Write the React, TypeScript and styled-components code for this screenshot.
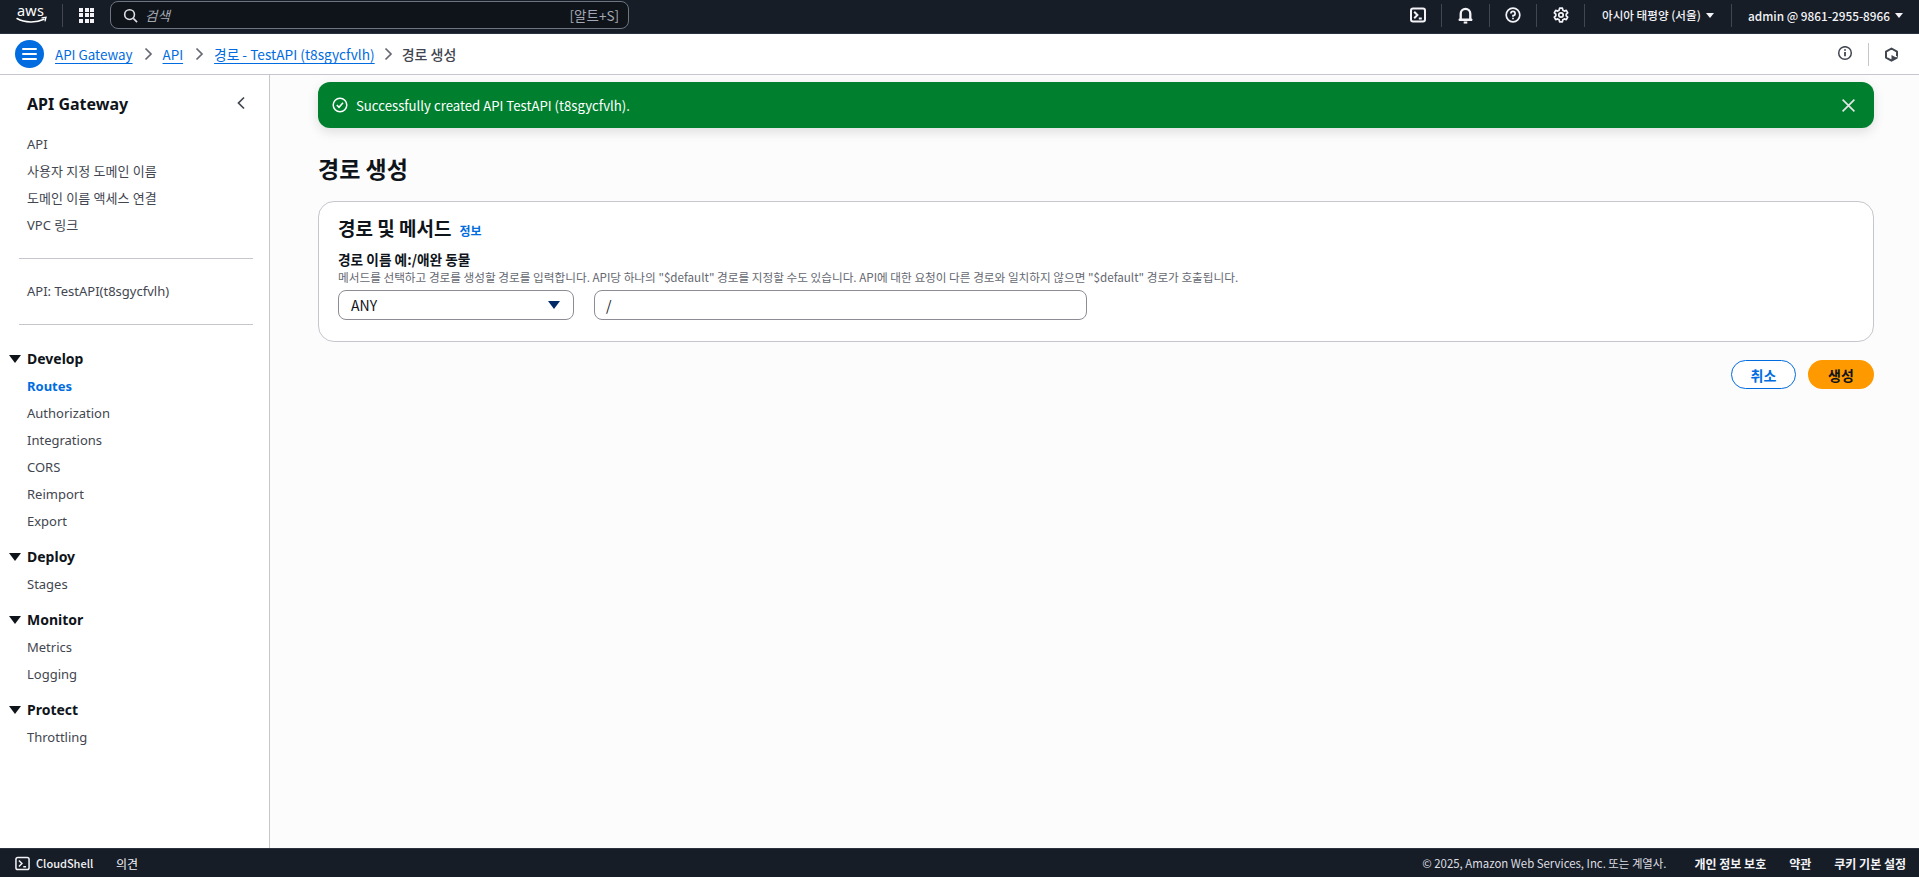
import React from "react";
import styled, { createGlobalStyle } from "styled-components";

const CJK = `"Noto Sans CJK KR", "Noto Sans", sans-serif`;
const LATIN = `"Noto Sans", "Noto Sans CJK KR", sans-serif`;

const Global = createGlobalStyle`
  html, body { margin: 0; padding: 0; height: 100%; background: #fff; }
  #root { height: 100%; }
  * { box-sizing: border-box; }
  body { font-family: ${CJK}; font-size: 14px; color: #0f141a; }
`;

const Page = styled.div`
  display: flex;
  flex-direction: column;
  height: 877px;
  overflow: hidden;
`;

const TopBar = styled.header`
  flex: 0 0 34px;
  display: flex;
  align-items: center;
  background: #161d26;
  border-bottom: 1px solid #2a3240;
  padding: 0 14px 3px 16px;
  color: #f3f3f7;
`;

const LogoBox = styled.div`
  width: 33px;
  height: 30px;
  display: flex;
  align-items: center;
  margin-right: 13px;
`;

const VDivider = styled.span`
  width: 1px;
  height: 23px;
  background: #424650;
  flex: none;
`;

const LightDivider = styled(VDivider)`
  background: #c6c6cd;
  margin: 0 15px 0 15px;
`;

const GridBtn = styled.div`
  width: 15px;
  height: 15px;
  margin: 0 16px;
  display: grid;
  grid-template-columns: repeat(3, 4px);
  grid-auto-rows: 4px;
  gap: 1.5px;
  span { background: #f3f3f7; }
`;

const Search = styled.div`
  width: 519px;
  height: 28px;
  border: 1px solid #6e7480;
  border-radius: 8px;
  background: #0f141a;
  display: flex;
  align-items: center;
  padding: 0 9px 0 12px;
  font-size: 13.5px;
  color: #a4a8b3;
`;

const SearchHint = styled.span`
  font-style: italic;
  margin-left: 7px;
  flex: 1;
`;

const Spacer = styled.div`
  flex: 1;
`;

const TopIcon = styled.div<{ $w: number }>`
  width: ${(p) => p.$w}px;
  height: 30px;
  display: flex;
  align-items: center;
  justify-content: center;
  flex: none;
`;

const TopMenu = styled.div<{ $w: number; $size: number; $pad: number }>`
  width: ${(p) => p.$w}px;
  padding-left: ${(p) => p.$pad}px;
  display: flex;
  align-items: center;
  gap: 5px;
  font-size: ${(p) => p.$size}px;
  font-weight: 500;
  flex: none;
  white-space: nowrap;
  color: #f3f3f7;
`;

const Caret = styled.span<{ $c?: string; $s?: number }>`
  width: 0;
  height: 0;
  flex: none;
  border-left: ${(p) => p.$s ?? 4}px solid transparent;
  border-right: ${(p) => p.$s ?? 4}px solid transparent;
  border-top: ${(p) => Math.round((p.$s ?? 4) * 1.35)}px solid ${(p) => p.$c ?? "#f3f3f7"};
`;

const CrumbBar = styled.div`
  flex: 0 0 41px;
  display: flex;
  align-items: center;
  background: #fff;
  border-bottom: 1px solid #c6c6cd;
  padding: 0 20px 0 15px;
`;

const MenuRound = styled.div`
  width: 29px;
  height: 28px;
  border-radius: 50%;
  background: #006ce0;
  display: flex;
  flex-direction: column;
  align-items: center;
  justify-content: center;
  gap: 3px;
  margin-right: 11px;
  span { width: 15px; height: 2px; background: #fff; border-radius: 1px; }
`;

const CrumbLink = styled.a<{ $size?: number }>`
  font-size: ${(p) => p.$size ?? 13.4}px;
  color: #006ce0;
  text-decoration: underline;
  text-underline-offset: 3px;
  white-space: nowrap;
`;

const CrumbSep = styled.span<{ $w?: number }>`
  width: ${(p) => p.$w ?? 30}px;
  display: flex;
  justify-content: center;
  flex: none;
`;

const CrumbCurrent = styled.span`
  font-size: 14px;
  font-weight: 500;
  color: #424650;
`;

const Body = styled.div`
  flex: 1;
  display: flex;
  min-height: 0;
`;

const SideNav = styled.nav`
  flex: 0 0 270px;
  background: #fff;
  border-right: 1px solid #c6c6cd;
  padding: 16px 16px 0 0;
  font-family: ${LATIN};
`;

const NavHead = styled.div`
  display: flex;
  align-items: center;
  justify-content: space-between;
  padding-left: 27px;
  height: 26px;
  margin-bottom: 14px;
  font-size: 16px;
  font-weight: 700;
  color: #0f141a;
`;

const Collapse = styled.span`
  display: flex;
  margin-right: 5px;
  margin-top: -3px;
`;

const NavItem = styled.div<{ $active?: boolean }>`
  height: 27px;
  line-height: 27px;
  padding-left: 27px;
  font-size: 13px;
  white-space: nowrap;
  color: ${(p) => (p.$active ? "#006ce0" : "#424650")};
  font-weight: ${(p) => (p.$active ? 700 : 400)};
`;

const NavRule = styled.hr`
  margin: 19px 0 19px 19px;
  border: 0;
  height: 1px;
  background: #c6c6cd;
`;

const NavGroup = styled.div`
  & + & { margin-top: 7px; }
`;

const NavSection = styled.div`
  display: flex;
  align-items: center;
  height: 29px;
  font-size: 14px;
  font-weight: 700;
  color: #0f141a;
  padding-left: 9px;
  gap: 6px;
`;

const Main = styled.main`
  flex: 1;
  background: #fcfcfc;
  padding: 7px 45px 0 48px;
  min-width: 0;
`;

const Flash = styled.div`
  height: 46px;
  border-radius: 12px;
  background: #00802f;
  color: #fff;
  display: flex;
  align-items: center;
  padding: 0 18px 0 14px;
  gap: 8px;
  font-size: 13.2px;
  box-shadow: 0 4px 12px rgba(0, 7, 22, 0.12);
`;

const FlashText = styled.span`
  flex: 1;
`;

const Title = styled.h1`
  margin: 25px 0 18px;
  font-size: 23px;
  line-height: 30px;
  font-weight: 700;
  color: #0f141a;
`;

const Card = styled.section`
  height: 141px;
  background: #fff;
  border: 1px solid #c6c6cd;
  border-radius: 16px;
  padding: 12px 19px 0;
`;

const CardHead = styled.div`
  display: flex;
  align-items: baseline;
  gap: 8px;
  height: 28px;
  h2 {
    margin: 0;
    font-size: 19px;
    line-height: 28px;
    font-weight: 700;
    color: #0f141a;
  }
`;

const InfoLink = styled.a`
  font-size: 12px;
  font-weight: 700;
  color: #006ce0;
`;

const FieldLabel = styled.div`
  margin-top: 8px;
  font-size: 13.7px;
  line-height: 18px;
  font-weight: 700;
  color: #0f141a;
`;

const FieldHint = styled.div`
  font-size: 11.65px;
  line-height: 18px;
  color: #656871;
  white-space: nowrap;
`;

const FieldRow = styled.div`
  display: flex;
  gap: 20px;
  margin-top: 4px;
`;

const SelectBox = styled.div`
  width: 236px;
  height: 30px;
  border: 1px solid #8c8c94;
  border-radius: 8px;
  background: #fff;
  display: flex;
  align-items: center;
  justify-content: space-between;
  padding: 0 13px 0 12px;
  font-size: 14px;
  color: #0f141a;
`;

const TextBox = styled.div`
  width: 493px;
  height: 30px;
  border: 1px solid #8c8c94;
  border-radius: 8px;
  background: #fff;
  display: flex;
  align-items: center;
  padding: 0 11px;
  font-size: 14px;
  color: #0f141a;
`;

const Actions = styled.div`
  display: flex;
  justify-content: flex-end;
  gap: 12px;
  margin-top: 18px;
`;

const Button = styled.button<{ $primary?: boolean }>`
  width: ${(p) => (p.$primary ? 66 : 65)}px;
  height: 29px;
  border-radius: 15px;
  border: ${(p) => (p.$primary ? "none" : "1px solid #006ce0")};
  background: ${(p) => (p.$primary ? "#ff9900" : "#fff")};
  color: ${(p) => (p.$primary ? "#0f141a" : "#006ce0")};
  font-family: inherit;
  font-size: 14px;
  font-weight: 700;
  padding: 0;
`;

const Footer = styled.footer`
  flex: 0 0 29px;
  display: flex;
  align-items: center;
  background: #161d26;
  color: #f3f3f7;
  padding: 0 13px 0 15px;
  font-size: 12px;
  border-top: 1px solid #2a3240;
`;

const FootBrand = styled.div`
  display: flex;
  align-items: center;
  gap: 6px;
  font-size: 11px;
  font-weight: 500;
  width: 101px;
`;

const Copyright = styled.span`
  font-size: 11.4px;
  color: #dedee3;
`;

const FootLink = styled.span`
  font-weight: 700;
  margin-left: 23px;
`;

const FootLinks = styled.div`
  display: flex;
  margin-left: 5px;
`;

const ShellIcon = ({ size = 16, sw = 1.6 }: { size?: number; sw?: number }) => (
  <svg width={size} height={size} viewBox="0 0 16 16" fill="none" stroke="#f3f3f7" strokeWidth={sw}>
    <rect x="1" y="1.5" width="14" height="13" rx="2" />
    <path d="M4.2 4.8 7.4 8l-3.2 3.2M8.8 11.4h3" />
  </svg>
);

const Chevron = () => (
  <svg width="14" height="14" viewBox="0 0 14 14" fill="none" stroke="#656871" strokeWidth="1.7">
    <path d="M4.5 1.5 10 7l-5.5 5.5" />
  </svg>
);

const NAV_MAIN = ["API", "사용자 지정 도메인 이름", "도메인 이름 액세스 연결", "VPC 링크"];

const SECTIONS: { title: string; items: string[] }[] = [
  { title: "Develop", items: ["Routes", "Authorization", "Integrations", "CORS", "Reimport", "Export"] },
  { title: "Deploy", items: ["Stages"] },
  { title: "Monitor", items: ["Metrics", "Logging"] },
  { title: "Protect", items: ["Throttling"] },
];

export default function App() {
  return (
    <Page>
      <Global />
      <TopBar>
        <LogoBox>
          <svg width="33" height="30" viewBox="0 0 33 30" fill="none">
            <text x="1" y="15.5" fill="#fff" fontFamily="'Noto Sans', sans-serif" fontSize="14.5" letterSpacing="0.2">aws</text>
            <path d="M1 18.5c8 4.5 19 4.5 27 .8" stroke="#fff" strokeWidth="1.5" strokeLinecap="round" />
            <path d="M26 17.9l4-.6-.9 3.6" stroke="#fff" strokeWidth="1.3" strokeLinecap="round" />
          </svg>
        </LogoBox>
        <VDivider />
        <GridBtn>
          {Array.from({ length: 9 }).map((_, i) => (
            <span key={i} />
          ))}
        </GridBtn>
        <Search>
          <svg width="15" height="15" viewBox="0 0 16 16" fill="none" stroke="#dedee3" strokeWidth="1.7">
            <circle cx="7" cy="7" r="5.2" />
            <path d="m11 11 4 4" />
          </svg>
          <SearchHint>검색</SearchHint>
          <span>[알트+S]</span>
        </Search>
        <Spacer />
        <TopIcon $w={47}>
          <ShellIcon sw={2} />
        </TopIcon>
        <VDivider />
        <TopIcon $w={47}>
          <svg width="17" height="17" viewBox="0 0 16 16" fill="none" stroke="#f3f3f7" strokeWidth="2.2">
            <path d="M3.5 11.3V6.300a4.500 4.500 0 0 1 9 0v5l1 .7h-11z" strokeLinejoin="round" />
            <path d="M6.300 14.600h3.400" strokeWidth="2" />
          </svg>
        </TopIcon>
        <VDivider />
        <TopIcon $w={46}>
          <svg width="16" height="16" viewBox="0 0 16 16" fill="none" stroke="#f3f3f7" strokeWidth="1.7">
            <circle cx="8" cy="8" r="6.8" />
            <path d="M5.900 6.400A2.100 2.100 0 1 1 8 8.500v1.200" />
            <path d="M8 10.800v1.500" />
          </svg>
        </TopIcon>
        <VDivider />
        <TopIcon $w={47}>
          <svg width="16" height="16" viewBox="0 0 16 16" fill="none" stroke="#f3f3f7" strokeWidth="1.7" strokeLinejoin="round">
            <path d="M6.600 1.200h2.800l.4 2 1.600.9 1.900-.7 1.400 2.500-1.500 1.300v1.600l1.500 1.300-1.400 2.500-1.900-.7-1.600.9-.4 2H6.600l-.4-2-1.600-.9-1.900.7-1.400-2.500 1.500-1.300V7.200L1.300 5.900l1.400-2.500 1.900.7 1.600-.9z" />
            <circle cx="8" cy="8" r="2.2" />
          </svg>
        </TopIcon>
        <VDivider />
        <TopMenu $w={146} $size={11.6} $pad={17}>
          아시아 태평양 (서울) <Caret />
        </TopMenu>
        <VDivider />
        <TopMenu $w={173} $size={11.8} $pad={16}>
          admin @ 9861-2955-8966 <Caret />
        </TopMenu>
      </TopBar>

      <CrumbBar>
        <MenuRound>
          <span />
          <span />
          <span />
        </MenuRound>
        <CrumbLink>API Gateway</CrumbLink>
        <CrumbSep>
          <Chevron />
        </CrumbSep>
        <CrumbLink>API</CrumbLink>
        <CrumbSep $w={31}>
          <Chevron />
        </CrumbSep>
        <CrumbLink $size={13.7}>경로 - TestAPI (t8sgycfvlh)</CrumbLink>
        <CrumbSep $w={27}>
          <Chevron />
        </CrumbSep>
        <CrumbCurrent>경로 생성</CrumbCurrent>
        <Spacer />
        <TopIcon $w={16}>
          <svg width="16" height="16" viewBox="0 0 16 16" fill="none" stroke="#424650" strokeWidth="1.5">
            <circle cx="8" cy="7" r="6.3" />
            <path d="M8 6v4.200" strokeWidth="1.8" />
            <path d="M8 3.200v1.600" strokeWidth="1.8" />
          </svg>
        </TopIcon>
        <LightDivider />
        <TopIcon $w={15}>
          <svg width="15" height="16" viewBox="0 0 15 16" fill="none" stroke="#424650" strokeWidth="2">
            <path d="M7.500 2.500 13 5.600v6L7.500 14.700 2 11.600v-6z" strokeLinejoin="round" />
            <path d="M7.500 9 13 12l-5.500 3z" fill="#424650" stroke="none" />
            <path d="M8.500 8.500l5 2.700" stroke="#fff" strokeWidth="1" />
          </svg>
        </TopIcon>
      </CrumbBar>

      <Body>
        <SideNav>
          <NavHead>
            API Gateway
            <Collapse>
              <svg width="14" height="14" viewBox="0 0 14 14" fill="none" stroke="#424650" strokeWidth="1.7">
                <path d="M10 1.500 4.500 7l5.500 5.500" />
              </svg>
            </Collapse>
          </NavHead>
          {NAV_MAIN.map((t) => (
            <NavItem key={t}>{t}</NavItem>
          ))}
          <NavRule />
          <NavItem>API: TestAPI(t8sgycfvlh)</NavItem>
          <NavRule />
          {SECTIONS.map((s) => (
            <NavGroup key={s.title}>
              <NavSection>
                <Caret $c="#0f141a" $s={6} />
                {s.title}
              </NavSection>
              {s.items.map((i) => (
                <NavItem key={i} $active={i === "Routes"}>
                  {i}
                </NavItem>
              ))}
            </NavGroup>
          ))}
        </SideNav>

        <Main>
          <Flash>
            <svg width="16" height="16" viewBox="0 0 16 16" fill="none" stroke="#fff" strokeWidth="1.5">
              <circle cx="8" cy="8" r="6.8" />
              <path d="m4.800 8 2.200 2.300 4-4.600" />
            </svg>
            <FlashText>Successfully created API TestAPI (t8sgycfvlh).</FlashText>
            <svg width="15" height="15" viewBox="0 0 14 14" fill="none" stroke="#e6e6e6" strokeWidth="1.5">
              <path d="m1.500 1.500 11 11M12.500 1.500l-11 11" />
            </svg>
          </Flash>
          <Title>경로 생성</Title>
          <Card>
            <CardHead>
              <h2>경로 및 메서드</h2>
              <InfoLink>정보</InfoLink>
            </CardHead>
            <FieldLabel>경로 이름 예:/애완 동물</FieldLabel>
            <FieldHint>
              메서드를 선택하고 경로를 생성할 경로를 입력합니다. API당 하나의 "$default" 경로를 지정할 수도 있습니다. API에 대한 요청이 다른 경로와 일치하지 않으면 "$default" 경로가 호출됩니다.
            </FieldHint>
            <FieldRow>
              <SelectBox>
                ANY
                <Caret $c="#002a66" $s={6} />
              </SelectBox>
              <TextBox>/</TextBox>
            </FieldRow>
          </Card>
          <Actions>
            <Button>취소</Button>
            <Button $primary>생성</Button>
          </Actions>
        </Main>
      </Body>

      <Footer>
        <FootBrand>
          <ShellIcon size={15} />
          CloudShell
        </FootBrand>
        <span>의견</span>
        <Spacer />
        <Copyright>© 2025, Amazon Web Services, Inc. 또는 계열사.</Copyright>
        <FootLinks>
          <FootLink>개인 정보 보호</FootLink>
          <FootLink>약관</FootLink>
          <FootLink>쿠키 기본 설정</FootLink>
        </FootLinks>
      </Footer>
    </Page>
  );
}
